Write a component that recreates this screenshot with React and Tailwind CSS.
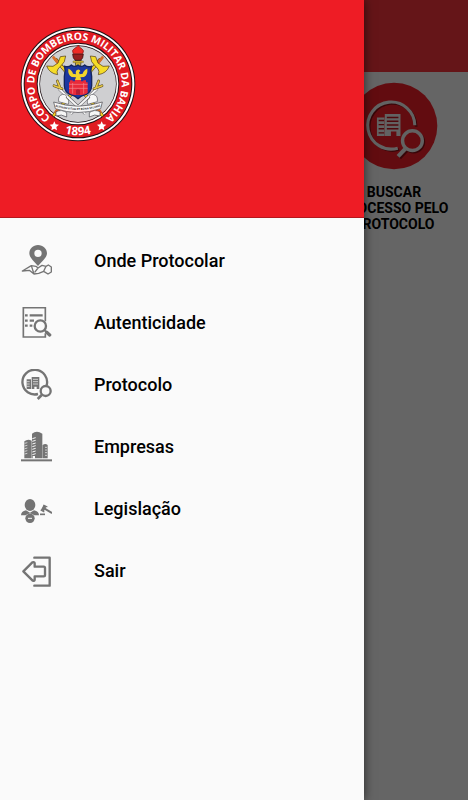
function Emblem() {
    return (
        <svg viewBox="18 19 348 348" className="size-[116px]" role="img" aria-label="Corpo de Bombeiros Militar da Bahia">
            <defs>
                <path id="ring-top" d="M127 306 A131 131 0 1 1 257 306" />
                <path id="ring-bottom" d="M110 323 A154 154 0 0 0 274 323" />
            </defs>
            <circle cx="192" cy="193" r="172" fill="#1f1014" />
            <circle cx="192" cy="193" r="169" fill="#ffffff" />
            <circle cx="192" cy="193" r="163" fill="#1f1014" />
            <circle cx="192" cy="193" r="160" fill="#e01b22" />
            <circle cx="192" cy="193" r="124" fill="#1f1014" />
            <circle cx="192" cy="193" r="121" fill="#ffffff" />
            <circle cx="192" cy="193" r="116" fill="#1f1014" />
            <circle cx="192" cy="193" r="114" fill="#cfcfd1" />

            <text fill="#ffffff" fontSize="31" fontWeight="700" className="font-['Open_Sans',sans-serif]" textAnchor="middle">
                <textPath href="#ring-top" startOffset="50%">CORPO DE BOMBEIROS MILITAR DA BAHIA</textPath>
            </text>
            <text fill="#ffffff" fontSize="35" fontWeight="700" className="font-['Open_Sans',sans-serif]" textAnchor="middle">
                <textPath href="#ring-bottom" startOffset="50%">1894</textPath>
            </text>
            <path d="M121 305l4 9 10 1-8 7 2 10-8-5-9 5 2-10-7-7 10-1z" fill="#ffffff" />
            <path d="M263 305l4 9 10 1-8 7 2 10-8-5-9 5 2-10-7-7 10-1z" fill="#ffffff" />

            {/* crossed axes */}
            <g strokeLinecap="round">
                <path d="M126 120L264 286M258 120L120 286" stroke="#4b3510" strokeWidth="10" />
                <path d="M126 120L264 286M258 120L120 286" stroke="#f0cf25" strokeWidth="7" />
                <path d="M119 114L133 131M265 114L251 131" stroke="#d9702a" strokeWidth="9" />
                <path d="M246 262L258 277M138 262L126 277" stroke="#d9702a" strokeWidth="10" />
            </g>
            <path d="M155 109L139 111L132 130L117 140L98 139Q106 161 131 165Q127 155 132 148L143 136L151 126Z" fill="#f5dc28" stroke="#4b3510" strokeWidth="2" />
            <path d="M229 109L245 111L252 130L267 140L286 139Q278 161 253 165Q257 155 252 148L241 136L233 126Z" fill="#f5dc28" stroke="#4b3510" strokeWidth="2" />

            {/* swords */}
            <path d="M135 207L214 282M249 207L170 282" stroke="#5b5b60" strokeWidth="9" />
            <path d="M135 207L214 282M249 207L170 282" stroke="#f7f7f7" strokeWidth="6" />
            <path d="M130 184l8 20M254 184l-8 20M120 198l24 9M264 198l-24 9" stroke="#57471b" strokeWidth="8" strokeLinecap="round" />
            <path d="M130 184l8 20M254 184l-8 20M120 198l24 9M264 198l-24 9" stroke="#e5c846" strokeWidth="5" strokeLinecap="round" />

            {/* torch */}
            <path d="M183 122h19l-3 22h-13z" fill="#d8b52c" stroke="#222222" strokeWidth="2" />
            <path d="M176 103h32q0 14-8 19h-16q-8-5-8-19z" fill="#96201f" stroke="#2b1010" strokeWidth="2" />
            <path d="M178 102q-7-10 4-16 10-6 12-10 0 7 8 10 11 7 4 16z" fill="#ef2b25" stroke="#7a1513" strokeWidth="2" />
            <path d="M177 124h31v5h-31z" fill="#e3c63a" stroke="#3d3011" strokeWidth="1" />

            {/* shield */}
            <path d="M152 140q12 4 20-4 10 8 20 0 10 8 20 0 8 8 20 4-3 12 1 30v28q-1 20-19 27-14 4-22 12-8-8-22-12-18-7-19-27v-28q4-18 1-30z" fill="#1d37a0" stroke="#14255f" strokeWidth="4" />
            <path d="M165 188h56v31q-6 7-29 7t-27-7z" fill="#e92a3a" />
            <path d="M168 190v-8h8v3h7v-7h18v7h7v-3h8v8z" fill="#e92a3a" />
            <path d="M165 194h56M165 206h56M176 190v32M209 190v32" stroke="#f28a92" strokeWidth="2" />
            <path d="M186 225v-13q6-7 12 0v13z" fill="#b01c34" />
            <path d="M163 147q11 4 14 15l9 2q-3-12 5-14 7-1 8 5l-4 3 2 6 9-2q3-11 14-15 2 18-10 25l-11 1 3 8h-19l3-8-13-1q-12-7-10-25z" fill="#f2d52b" />

            {/* motto ribbon */}
            <path d="M134 246q-3-18 12-22 14 0 11 11 10 4 6 19zM250 246q3-18-12-22-14 0-11 11-10 4-6 19z" fill="#f6f6f6" stroke="#55555a" strokeWidth="2" />
            <path d="M126 276q18-8 32 3v13q-16-10-32-3zM258 276q-18-8-32 3v13q16-10 32-3z" fill="#f6f6f6" stroke="#44444a" strokeWidth="2" />
            <path id="motto" d="M120 259q72 24 144 0" fill="none" />
            <path d="M119 247q73 25 146 0l-5 20q-68 23-136 0z" fill="#f8f8f8" stroke="#44444a" strokeWidth="2" />
            <text fill="#33333a" fontSize="8" fontWeight="700" className="font-['Open_Sans',sans-serif]" textAnchor="middle">
                <textPath href="#motto" startOffset="50%">ALIENAM VITAM ET BONA SALVARE</textPath>
            </text>
        </svg>
    );
}

function MapIcon() {
    return (
        <svg viewBox="30 30 96 96" className="size-8 shrink-0" aria-hidden="true">
            <path fillRule="evenodd" d="M84 30c-15 0-26 11-26 25 0 12 12 22 26 38 14-16 27-26 27-38 0-14-12-25-27-25zm0 14a11 11 0 1 1 0 22 11 11 0 0 1 0-22z" fill="#747474" />
            <path d="M37 108L64 92L78 94L84 99L96 91L108 94L115 90L124 96V111L114 117L101 109L86 115L72 117L58 106ZM64 92L72 117M84 99L74 112M108 94L101 109" fill="none" stroke="#747474" strokeWidth="4" strokeLinejoin="round" />
        </svg>
    );
}

function DocumentSearchIcon() {
    return (
        <svg viewBox="30 27 96 96" className="size-8 shrink-0" aria-hidden="true">
            <path d="M106 70V29H40V117H106V106" fill="none" stroke="#747474" strokeWidth="5" />
            <path d="M45 52h8M59 52h39M45 68h8M59 68h13M45 83h8M59 83h8" stroke="#747474" strokeWidth="7" />
            <circle cx="91" cy="84" r="17" fill="#fafafa" stroke="#747474" strokeWidth="7" />
            <path d="M104 97l6 6" stroke="#747474" strokeWidth="6" />
            <path d="M110 103l9 8" stroke="#747474" strokeWidth="10" strokeLinecap="round" />
        </svg>
    );
}

function ProtocolIcon() {
    return (
        <svg viewBox="30 27 96 96" className="size-8 shrink-0" aria-hidden="true">
            <path d="M110 76A37 37 0 1 0 84 102" fill="none" stroke="#747474" strokeWidth="7" />
            <path d="M50 58h13v29h-13zM65 51h23v36h-8v-7h-7v7h-8z" fill="#747474" />
            <path d="M50 65h9M50 72h9M50 79h9M69 58h15M69 65h15M69 72h15" stroke="#fafafa" strokeWidth="2" />
            <circle cx="107" cy="93" r="15" fill="none" stroke="#747474" strokeWidth="7" />
            <path d="M95 105l-12 12" stroke="#747474" strokeWidth="8" />
        </svg>
    );
}

function BuildingsIcon() {
    return (
        <svg viewBox="30 27 96 96" className="size-8 shrink-0" aria-hidden="true">
            <path d="M43 109V58q10-8 22-2v53zM66 109V35q14-11 31 0v74zM98 109V69q8-6 15 0v40z" fill="#747474" />
            <path d="M67 50l10-3M67 58l10-3M67 66l10-3M67 74l10-3M67 82l10-3M67 90l10-3M67 98l10-3" stroke="#fafafa" strokeWidth="3" />
            <path d="M44 64l8-2M44 72l8-2M44 80l8-2M44 88l8-2M44 96l8-2M105 76h6M105 84h6M105 92h6M105 100h6" stroke="#fafafa" strokeWidth="2" />
            <path d="M68 102h7v8h-7z" fill="#fafafa" />
            <path d="M33 115h93" stroke="#747474" strokeWidth="6" />
        </svg>
    );
}

function LegislationIcon() {
    return (
        <svg viewBox="30 24 96 96" className="size-8 shrink-0" aria-hidden="true">
            <ellipse cx="60" cy="60" rx="16" ry="18" fill="#747474" />
            <path d="M33 91q0-12 15-15l12 7 12-7q15 3 15 15H73q-13-11-26 0z" fill="#747474" />
            <circle cx="60" cy="100" r="14" fill="#747474" />
            <path d="M54 100h12" stroke="#fafafa" strokeWidth="3" />
            <path d="M90 88h15" stroke="#747474" strokeWidth="5" />
            <path d="M104 71l20 12" stroke="#747474" strokeWidth="6" strokeLinecap="round" />
            <path d="M105 62L97 77" stroke="#747474" strokeWidth="10" />
            <path d="M100 60l12 6M92 75l11 6" stroke="#747474" strokeWidth="4" />
        </svg>
    );
}

function ExitIcon() {
    return (
        <svg viewBox="30 24 96 96" className="size-8 shrink-0" aria-hidden="true">
            <path d="M73 32H119V116H73" fill="none" stroke="#747474" strokeWidth="7" strokeLinejoin="round" strokeLinecap="round" />
            <path d="M40 73L67 46Q74 44 74 49V59H101Q105 59 105 63V84Q105 88 101 88H74V98Q74 102 68 101Z" fill="none" stroke="#747474" strokeWidth="7" strokeLinejoin="round" />
        </svg>
    );
}

const items = [
    { label: "Onde Protocolar", Icon: MapIcon },
    { label: "Autenticidade", Icon: DocumentSearchIcon },
    { label: "Protocolo", Icon: ProtocolIcon },
    { label: "Empresas", Icon: BuildingsIcon },
    { label: "Legislação", Icon: LegislationIcon },
    { label: "Sair", Icon: ExitIcon },
];

function SearchBadge() {
    return (
        <svg viewBox="0 0 258 258" className="size-[88px]" aria-hidden="true">
            <circle cx="129" cy="129" r="127" fill="#f5202a" />
            <g transform="translate(4 4)" fill="none" stroke="#8a1016">
                <path d="M190 127A69 69 0 1 0 140 194" strokeWidth="8" />
                <circle cx="183" cy="172" r="29" strokeWidth="9" />
                <path d="M162 196l-21 22" strokeWidth="12" />
            </g>
            <path d="M190 127A69 69 0 1 0 140 194" fill="none" stroke="#f4f4f4" strokeWidth="9" />
            <path d="M79 104h22v54H79zM102 94h46v64h-12v-13h-16v13h-18z" fill="#f4f4f4" />
            <path d="M84 113h16M84 125h16M84 137h16M84 149h16M108 104h34M108 115h34M108 126h34M108 137h34" stroke="#c5161e" strokeWidth="4" />
            <circle cx="183" cy="172" r="29" fill="#f5202a" stroke="#f4f4f4" strokeWidth="10" />
            <path d="M162 196l-21 22" stroke="#f4f4f4" strokeWidth="12" />
        </svg>
    );
}

function HomePage() {
    return (
        <main className="min-h-screen bg-[#fcfcfc]">
            <div className="h-[72px] bg-[#fd353c]" />
            <div className="flex justify-end pt-[10px] pr-5">
                <button className="flex w-[108px] flex-col items-center gap-[14px] text-center text-sm leading-4 font-bold">
                    <SearchBadge />
                    <span className="whitespace-nowrap">
                        BUSCAR<br />PROCESSO PELO<br />PROTOCOLO
                    </span>
                </button>
            </div>
        </main>
    );
}

function Drawer() {
    return (
        <aside className="absolute inset-y-0 left-0 w-7/9 bg-[#fafafa] shadow-[0_0_10px_rgba(0,0,0,0.6)]">
            <div className="h-[218px] border-b border-[#b5181e] bg-[#ee1c25] px-5 pt-[26px]">
                <Emblem />
            </div>
            <nav className="pt-3">
                {items.map(({ label, Icon }) => (
                    <a key={label} href="#" className="flex h-[62px] items-center gap-[42px] px-5 text-lg font-medium text-black">
                        <Icon />
                        {label}
                    </a>
                ))}
            </nav>
        </aside>
    );
}

export default function App() {
    return (
        <div className="relative min-h-screen overflow-hidden font-[Roboto,sans-serif]">
            <HomePage />
            <div className="absolute inset-0 bg-black/60" />
            <Drawer />
        </div>
    );
}
